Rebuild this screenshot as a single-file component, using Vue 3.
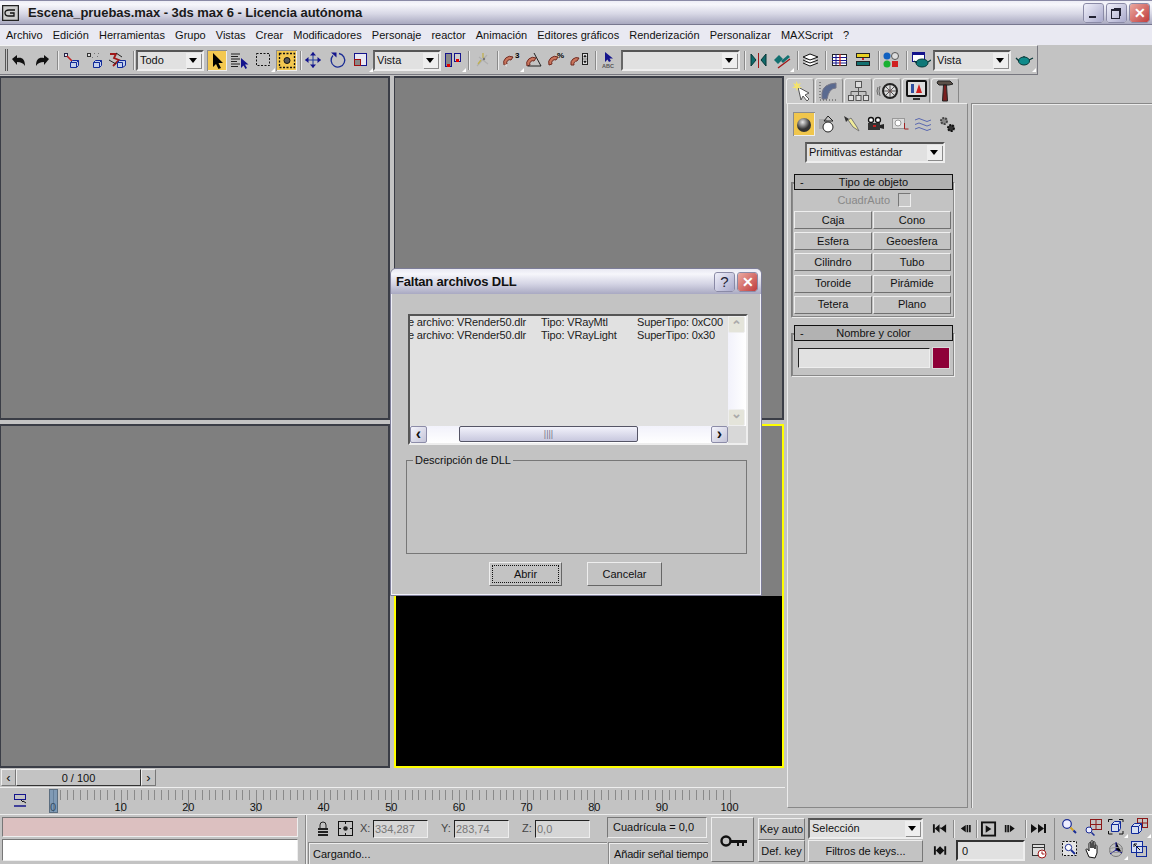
<script setup>
const S = {
  undo: '<path d="M3 9 8 5v3c5-1 8 1 8 8-2-3-4-4-8-4v3z" fill="#111"/>',
  redo: '<path d="M17 9 12 5v3C7 7 4 9 4 16c2-3 4-4 8-4v3z" fill="#111"/>',
  link: '<rect x="2.500" y="3.500" width="3" height="3" fill="#e4e4ee" stroke="#224"/><path d="M5 6 11 12" stroke="#c02020" stroke-width="1.600"/><path d="M8.500 12.500h6v5h-6zM8.500 12.500l2-2h6v5l-2 2M14.500 12.500l2-2" fill="#c4d0ea" stroke="#102a9a"/>',
  unlink: '<rect x="2.500" y="3.500" width="3" height="3" fill="#ddd" stroke="#333"/><path d="M7 7l1 1M9 3l1 1M13 3l1 1M12 6l1 1" stroke="#777"/><path d="M8.500 12.500h6v5h-6zM8.500 12.500l2-2h6v5l-2 2M14.500 12.500l2-2" fill="#c4d0ea" stroke="#102a9a"/>',
  bind: '<path d="M3 4h6l-2 4 5 2-6 6" fill="none" stroke="#a01818" stroke-width="1.800"/><path d="M9 3l6 4M2 10l7 4" stroke="#222"/><path d="M10.500 12.500h5v5h-5zM10.500 12.500l2-2h6v5l-3 2" fill="#c4d0ea" stroke="#102a9a"/>',
  arrow: '<path d="M6 3v14l3-3 2.500 5 2.500-1-2.500-5h4.500z" fill="#000"/>',
  list: '<path d="M1 4h9M1 6.500h7M1 9h9M1 11.500h6M1 14h9M1 16.500h7" stroke="#222"/><path d="M11 8v10l2.500-2.500 2 3.500 1.500-1-2-3.500h3.500z" fill="#14148c"/>',
  rect: '<rect x="3.500" y="3.500" width="13" height="12" fill="none" stroke="#111" stroke-dasharray="2 1.500"/>',
  cross: '<rect x="2.500" y="3.500" width="15" height="14" fill="none" stroke="#111" stroke-width="1.300" stroke-dasharray="2 1.500"/><circle cx="10" cy="10.500" r="3" fill="#555" stroke="#111"/>',
  move: '<path d="M10 2.500v15M2.500 10h15" stroke="#1f3a9c"/><path d="M10 2l3 3.500H7zM10 18l3-3.500H7zM2 10l3.500-3v6zM18 10l-3.500-3v6z" fill="#14148c"/>',
  rotate: '<path d="M12 3.500a6.800 6.800 0 1 1-6 2" fill="none" stroke="#1a2c94" stroke-width="1.300"/><path d="M4 2.500h5.500v5z" fill="#14148c"/>',
  scale: '<rect x="3.500" y="3.500" width="12" height="12" fill="#e8e8f2" stroke="#14148c"/><rect x="3.500" y="9.500" width="6" height="6" fill="#888" stroke="#a01010"/>',
  pair: '<rect x="1.500" y="3.500" width="6" height="13" fill="#888" stroke="#14148c"/><rect x="3" y="14" width="3" height="3" fill="#e00000"/><rect x="10.500" y="3.500" width="6" height="8" fill="#ccc" stroke="#14148c"/><rect x="12" y="9" width="3" height="3" fill="#e00000"/>',
  manip: '<path d="M4 16 14 5M6 7l9 7" stroke="#b0b0b0" stroke-width="1.300"/><path d="M10 3v5M8 10l-3 4" stroke="#c0b050" stroke-width="1.300"/><circle cx="11" cy="9" r="1.200" fill="#777"/>',
  snap3: '<path d="M2 15a6.500 6.500 0 0 1 9-8l-2 3a3 3 0 0 0-4 4z" fill="#c9755c" stroke="#702a20"/><path d="M2 15l3-1v3z" fill="#ddd"/><text x="13" y="8" font-size="8" font-weight="700" font-family="Liberation Sans">3</text>',
  angle: '<path d="M2 16a6.500 6.500 0 0 1 9-8l-2 3a3 3 0 0 0-4 4z" fill="#c9755c" stroke="#702a20"/><path d="M9 3l7 13H3" fill="none" stroke="#222"/>',
  pct: '<path d="M2 15a6.500 6.500 0 0 1 9-8l-2 3a3 3 0 0 0-4 4z" fill="#c9755c" stroke="#702a20"/><text x="10" y="8" font-size="8" font-weight="700" font-family="Liberation Sans">%</text>',
  spin: '<path d="M1 15a6 6 0 0 1 8-7l-2 3a3 3 0 0 0-3 4z" fill="#c9755c" stroke="#702a20"/><rect x="12.500" y="3.500" width="5" height="11" fill="#ddd" stroke="#222"/><path d="M12 9h6M15 5l-1.300 2h2.600zM15 13l-1.300-2h2.600z" fill="#111" stroke="#111" stroke-width=".5"/>',
  abc: '<path d="M5 2v10l2.500-2.500L9 12l2-1-1.500-2.500H13z" fill="#14148c"/><text x="2" y="18" font-size="5.500" font-weight="700" fill="#555" font-family="Liberation Sans">ABC</text>',
  mirror: '<path d="M2 4l5 6-5 6zM17 4l-5 6 5 6z" fill="#0f6b6b" stroke="#063838"/><path d="M9.500 3v15" stroke="#a01818"/>',
  align: '<path d="M2 10l5-5 4 4-5 5z" fill="#137070"/><path d="M9 11l7-6 2 2-7 6z" fill="#137070"/><path d="M6 18 18 9" stroke="#a01818" stroke-width="1.300"/>',
  layers: '<path d="M2 7l7-3 8 3-8 3zM2 10l7 3 8-3M2 13l7 3 8-3" fill="#fff" stroke="#111"/>',
  track: '<rect x="1.500" y="4.500" width="14" height="11" fill="#fff" stroke="#222"/><path d="M1 7.500h15M1 10.500h15M1 13h15M5 4v11" stroke="#14148c"/><path d="M9 4v12" stroke="#c02020" stroke-width="1.300"/>',
  schem: '<rect x="2.500" y="3.500" width="13" height="4" fill="#e8d020" stroke="#222"/><path d="M9 8v2" stroke="#d02020" stroke-width="2"/><rect x="2.500" y="11.500" width="13" height="4" fill="#137070" stroke="#222"/>',
  mat: '<circle cx="6" cy="6" r="3.500" fill="#1060c0"/><circle cx="14" cy="6" r="3.500" fill="#ddd" stroke="#555"/><circle cx="6" cy="14" r="3.500" fill="#18b030"/><rect x="11" y="11" width="6" height="6" fill="#d02020"/>',
  rscene: '<rect x="1.500" y="2.500" width="12" height="9" fill="#fff" stroke="#14148c"/><rect x="1" y="2" width="13" height="3" fill="#14148c"/><ellipse cx="11" cy="13" rx="6" ry="4" fill="#0f7878" stroke="#063838"/><path d="M3 11l3 2M17 12l3-2" stroke="#063838" stroke-width="1.300"/>',
  teapot: '<ellipse cx="10" cy="11" rx="5.500" ry="4" fill="#0f8a8a" stroke="#063838"/><path d="M10 6v1M2 8l3 3M15 10l4-2" stroke="#063838" stroke-width="1.300"/>',
  logo: '<rect x=".5" y=".5" width="16" height="15" fill="#ccc" stroke="#222" stroke-width="1.500"/><path d="M13 5H7Q3 5 3 8t4 3h5V8H8" fill="none" stroke="#111" stroke-width="1.300"/>',
  t1: '<path d="M9 7l3 13 2-4 4 5 2-2-4-4 4-2z" fill="#fff" stroke="#555"/><path d="M7 1l2 3 3-1-2 3 3 2-4 0-1 3-1-3H3l3-2-2-3 3 1z" fill="#f4e36c"/>',
  t2: '<path d="M4 20V14Q5 5 18 4v5Q11 9 9 20z" fill="#5a6a90" stroke="#778"/><path d="M2 3v18h18" stroke="#444" fill="none" stroke-dasharray="1 2"/>',
  t3: '<path d="M11.500 9v3.500M4 16v-3.500h15V16M11.500 12.500V16" stroke="#555" fill="none"/><rect x="8.500" y="2.500" width="6" height="6" fill="#ddd" stroke="#555"/><rect x="1.500" y="16.500" width="5" height="5" fill="#ddd" stroke="#555"/><rect x="9" y="16.500" width="5" height="5" fill="#ddd" stroke="#555"/><rect x="16.500" y="16.500" width="5" height="5" fill="#ddd" stroke="#555"/>',
  t4: '<circle cx="14" cy="12" r="7" fill="#ddd" stroke="#222" stroke-width="2"/><circle cx="14" cy="12" r="1.500" fill="#c02020"/><path d="M14 6v12M8 12h12M10 8l8 8M18 8l-8 8" stroke="#555"/><path d="M4 7Q2 12 4 17M2 8Q0 12 2 16" fill="none" stroke="#666"/>',
  t5: '<rect x="2" y="2" width="19" height="15" rx="1" fill="#ddd" stroke="#111" stroke-width="2"/><path d="M11 14l3-9 3 9z" fill="#d02020"/><path d="M6 14V5h3v9z" fill="#3050a0"/><path d="M8 19h7v2H8z" fill="#333"/>',
  t6: '<path d="M4 2h12l3 3-4 1H5L3 4z" fill="#5a5048" stroke="#222"/><path d="M9.500 6h3l1 16h-5z" fill="#7a2020" stroke="#222"/>',
  sphere: '<defs><radialGradient id="sp" cx=".4" cy=".3"><stop offset="0" stop-color="#e8e8e8"/><stop offset="1" stop-color="#333"/></radialGradient></defs><circle cx="11" cy="12" r="7" fill="url(#sp)"/>',
  shape: '<rect x="2" y="6" width="8" height="10" fill="#aaa"/><circle cx="11" cy="14" r="5" fill="#fff" stroke="#222"/><path d="M7 8l4-5 5 5z" fill="none" stroke="#222"/>',
  light: '<path d="M3 3l5 3-3 3z" fill="#333"/><path d="M7 7l3-2 6 9 2 4-6-4z" fill="#f0ec9a" stroke="#777"/>',
  cam: '<circle cx="6" cy="7" r="2.500" fill="#fff" stroke="#111" stroke-width="1.300"/><circle cx="13" cy="7" r="2.500" fill="#fff" stroke="#111" stroke-width="1.300"/><rect x="3" y="10" width="12" height="7" fill="#333"/><path d="M15 12l4-1v5l-4-1z" fill="#222"/><rect x="8" y="12" width="3" height="2" fill="#c02020"/>',
  helper: '<rect x="3.500" y="5.500" width="12" height="10" fill="#ddd" stroke="#999"/><circle cx="9" cy="10" r="3" fill="#fff" stroke="#999"/><path d="M15.500 10v6h4" stroke="#a02020" fill="none"/>',
  wave: '<path d="M2 7q4-3 8 0t8 0M2 11.500q4-3 8 0t8 0M2 16q4-3 8 0t8 0" fill="none" stroke="#5a68b0"/>',
  gears: '<circle cx="7" cy="8" r="3" fill="#888" stroke="#444" stroke-width="2" stroke-dasharray="2 1"/><circle cx="14" cy="15" r="3" fill="#333" stroke="#111" stroke-width="2" stroke-dasharray="2 1"/>',
  lock: '<path d="M4 7V4a3 3 0 0 1 6 0v3" fill="none" stroke="#222"/><path d="M2 7h10v2H2zM2 10h10v2H2zM2 13h10v2H2z" fill="#222"/>',
  pivot: '<rect x=".5" y=".5" width="14" height="14" fill="none" stroke="#111"/><circle cx="7.500" cy="7.500" r="2.200" fill="#222"/><path d="M1 7.500h2M12 7.500h2M7.500 1v2M7.500 12v2" stroke="#111"/>',
  key: '<circle cx="8" cy="9" r="4.500" fill="none" stroke="#111" stroke-width="2.400"/><path d="M12 8h17v3h-3v3h-2v-3h-3v3h-2v-3h-7z" fill="#111"/>',
  keyptr: '<rect x="1.500" y="1.500" width="11" height="5" fill="none" stroke="#14148c"/><path d="M8 7l2 2v-1l3 2" stroke="#111" fill="none"/><path d="M1 13h12" stroke="#14148c" stroke-width="1.500"/>',
  first: '<path d="M1 3h2v9H1zM8 3v9L3 7.500zM15 3v9L9 7.500z" fill="#111"/><path d="M8 7h2" stroke="#111"/>',
  prev: '<path d="M7 3v9L1 7.500zM8 3h2v9H8zM11 3h2v9h-2z" fill="#111"/>',
  play: '<rect x="1" y="1" width="14" height="14" fill="none" stroke="#111" stroke-width="2"/><path d="M5 4v8l6-4z" fill="#111"/>',
  next: '<path d="M1 3h2v9H1zM4 3h2v9H4zM7 3v9l6-4.500z" fill="#111"/>',
  last: '<path d="M1 3v9l6-4.500zM8 3v9l6-4.500zM14 3h2v9h-2z" fill="#111"/>',
  prevkey: '<path d="M1 3h2v9H1zM7.500 3v9L3 7.500zM7.500 3v9L12 7.500zM12 3h2v9h-2z" fill="#111"/>',
  time: '<rect x="1.500" y="1.500" width="12" height="11" fill="#ddd" stroke="#333"/><path d="M1 4.500h12" stroke="#333"/><circle cx="11" cy="11" r="4" fill="#fff" stroke="#a01818"/><path d="M11 8.500V11h2.500" stroke="#a01818" fill="none"/>',
  zoom: '<circle cx="6" cy="6" r="4.300" fill="#eef" stroke="#1a2c94" stroke-width="1.200"/><path d="M9.500 9.500l3 3" stroke="#d0a020" stroke-width="1.800"/><path d="M12.500 12.500l2.500 2.500" stroke="#1a2c94" stroke-width="2"/>',
  zoomall: '<rect x="6.500" y="1.500" width="11" height="10" fill="none" stroke="#8c1818"/><path d="M12 1v11M6 6.500h12" stroke="#8c1818"/><circle cx="5" cy="12" r="3" fill="#eef" stroke="#1a2c94"/><path d="M7.500 14.500l3 3" stroke="#1a2c94" stroke-width="1.500"/>',
  extents: '<path d="M1.500 4V1.500h4M12 1.500h4V4M1.500 13v3h4M12 16h4v-3" fill="none" stroke="#111"/><path d="M4.500 6.500h7v7h-7zM4.500 6.500l3-3h6v7l-2 3M11.500 6.500l2-3" fill="#d5def0" stroke="#102a9a"/>',
  extall: '<rect x="7.500" y=".5" width="10" height="9" fill="none" stroke="#8c1818"/><path d="M12.500 0v10M7 5h11" stroke="#8c1818"/><path d="M1.500 8.500h7v7h-7zM1.500 8.500l3-3h7v7l-3 3M8.500 8.500l3-3" fill="#d5def0" stroke="#102a9a"/>',
  region: '<rect x="1.500" y="1.500" width="14" height="14" fill="#e4e4e4" stroke="#111" stroke-dasharray="2 1.500"/><circle cx="7.500" cy="7.500" r="3.200" fill="#fff" stroke="#1a2c94"/><path d="M10 10l4 4" stroke="#1a2c94" stroke-width="1.800"/>',
  pan: '<path d="M5 17 2 10c0-2 2-1 3 1V4c0-2 2-2 2 0v4-6c0-2 2-2 2 0v6-5c0-2 2-2 2 0v6-3c0-2 2-1 2 0v7l-2 5z" fill="#fff" stroke="#111"/>',
  orbit: '<circle cx="9" cy="10" r="6.500" fill="none" stroke="#777"/><path d="M9 2v8l6 3M9 10l-6 4" stroke="#14148c"/><ellipse cx="9" cy="10" rx="6.500" ry="2.500" fill="none" stroke="#999"/>',
  maxi: '<rect x="1.500" y="1.500" width="11" height="11" fill="#d5def0" stroke="#102a9a"/><rect x="6.500" y="6.500" width="10" height="10" fill="none" stroke="#102a9a"/><path d="M4 4l6 6M4 4h3M4 4v3" stroke="#111" fill="none"/>'
}

function flow(list) {
  let end = 0
  return list.map((it) => {
    const item = { ...it, ml: it.x - end }
    end = it.x + it.w
    return item
  })
}

const menus = ['Archivo', 'Edición', 'Herramientas', 'Grupo', 'Vistas', 'Crear', 'Modificadores', 'Personaje', 'reactor', 'Animación', 'Editores gráficos', 'Renderización', 'Personalizar', 'MAXScript', '?']

const tools = flow([
  { k: 'grip', x: 5, w: 3 }, { i: 'undo', x: 9, w: 20 }, { i: 'redo', x: 32, w: 20 }, { k: 'sep', x: 57, w: 2 },
  { i: 'link', x: 62, w: 20 }, { i: 'unlink', x: 85, w: 20 }, { i: 'bind', x: 107, w: 20 }, { k: 'sep', x: 133, w: 2 },
  { k: 'combo', t: 'Todo', x: 136, w: 68 }, { i: 'arrow', x: 207, w: 20, on: 1 }, { i: 'list', x: 230, w: 20 },
  { i: 'rect', x: 253, w: 20, f: 1 }, { i: 'cross', x: 276, w: 21, on: 1 }, { k: 'sep', x: 300, w: 2 },
  { i: 'move', x: 303, w: 20 }, { i: 'rotate', x: 327, w: 20 }, { i: 'scale', x: 351, w: 20, f: 1 },
  { k: 'combo', t: 'Vista', x: 373, w: 68 }, { i: 'pair', x: 444, w: 20, f: 1 }, { k: 'sep', x: 468, w: 2 },
  { i: 'manip', x: 473, w: 20 }, { k: 'sep', x: 497, w: 2 }, { i: 'snap3', x: 502, w: 20, f: 1 }, { i: 'angle', x: 525, w: 20 },
  { i: 'pct', x: 547, w: 20 }, { i: 'spin', x: 570, w: 20 }, { k: 'sep', x: 595, w: 2 }, { i: 'abc', x: 600, w: 20 },
  { k: 'combo', t: '', x: 621, w: 119 }, { k: 'sep', x: 744, w: 2 }, { i: 'mirror', x: 749, w: 20 }, { i: 'align', x: 772, w: 20, f: 1 },
  { k: 'sep', x: 797, w: 2 }, { i: 'layers', x: 801, w: 20 }, { k: 'sep', x: 825, w: 2 }, { i: 'track', x: 831, w: 20 },
  { i: 'schem', x: 854, w: 20 }, { k: 'sep', x: 878, w: 2 }, { i: 'mat', x: 881, w: 20 }, { k: 'sep', x: 906, w: 2 },
  { i: 'rscene', x: 911, w: 20 }, { k: 'combo', t: 'Vista', x: 933, w: 78 }, { i: 'teapot', x: 1014, w: 20, f: 1 }
])

const tabs = ['t1', 't2', 't3', 't4', 't5', 't6']
const creators = ['sphere', 'shape', 'light', 'cam', 'helper', 'wave', 'gears']
const prims = ['Caja', 'Cono', 'Esfera', 'Geoesfera', 'Cilindro', 'Tubo', 'Toroide', 'Pirámide', 'Tetera', 'Plano']
const coords = [
  { l: 'X:', v: '334,287' }, { l: 'Y:', v: '283,74' }, { l: 'Z:', v: '0,0' }
]
const ticks = Array.from({ length: 101 }, (_, n) => n)
const play1 = flow([
  { i: 'first', x: 1, w: 16 }, { s: 1, x: 22, w: 2 }, { i: 'prev', x: 29, w: 14 }, { s: 1, x: 45, w: 2 },
  { i: 'play', x: 50, w: 16 }, { i: 'next', x: 73, w: 14 }, { s: 1, x: 94, w: 2 }, { i: 'last', x: 99, w: 17 }
])
const nav = ['zoom', 'zoomall', 'extents', 'extall', 'region', 'pan', 'orbit', 'maxi']
</script>

<template>
  <div class="app">
    <header class="title">
      <svg class="logo" width="17" height="16" viewBox="0 0 17 16" v-html="S.logo"></svg>
      <span class="title-text">Escena_pruebas.max - 3ds max 6 - Licencia autónoma</span>
      <div class="wbtns">
        <button class="wb"><span class="w-min"></span></button>
        <button class="wb"><span class="w-max"></span></button>
        <button class="wb red">✕</button>
      </div>
    </header>

    <nav class="menu"><span v-for="m in menus" :key="m">{{ m }}</span></nav>

    <div class="toolrow">
      <div class="toolbar">
        <template v-for="(t, n) in tools" :key="n">
          <div v-if="t.k === 'grip'" class="grip" :style="{ marginLeft: t.ml + 'px' }"></div>
          <div v-else-if="t.k === 'sep'" class="sep" :style="{ marginLeft: t.ml + 'px' }"></div>
          <div v-else-if="t.k === 'combo'" class="combo" :style="{ marginLeft: t.ml + 'px', width: t.w + 'px' }">
            <span>{{ t.t }}</span><i class="drop"></i>
          </div>
          <div v-else class="tool" :class="{ on: t.on, fly: t.f }" :style="{ marginLeft: t.ml + 'px', width: t.w + 'px' }">
            <svg width="20" height="20" viewBox="0 0 20 20" v-html="S[t.i]"></svg>
          </div>
        </template>
      </div>
    </div>

    <div class="main">
      <div class="leftcol">
        <div class="views">
          <div class="vp"></div>
          <div class="vp"></div>
          <div class="vp"></div>
          <div class="vp active"></div>
        </div>
        <div class="tslider">
          <button class="tarrow">‹</button>
          <div class="tthumb">0 / 100</div>
          <button class="tarrow">›</button>
        </div>
        <div class="ruler">
          <svg class="keyptr" width="15" height="15" viewBox="0 0 15 15" v-html="S.keyptr"></svg>
          <div class="ticks">
            <i v-for="n in ticks" :key="n" class="tick" :class="{ ten: n % 10 === 0 }"><b v-if="n % 10 === 0">{{ n }}</b></i>
            <div class="playhead"></div>
          </div>
        </div>
      </div>

      <aside class="side">
        <div class="tabs">
          <div v-for="(t, n) in tabs" :key="t" class="tab" :class="{ cur: n === 0 }">
            <svg width="23" height="23" viewBox="0 0 23 23" v-html="S[t]"></svg>
          </div>
        </div>
        <div class="panels">
          <section class="cmd">
            <div class="creators">
              <div v-for="(c, n) in creators" :key="c" class="cr" :class="{ on: n === 0 }">
                <svg width="22" height="22" viewBox="0 0 22 22" v-html="S[c]"></svg>
              </div>
            </div>
            <div class="combo primcombo"><span>Primitivas estándar</span><i class="drop"></i></div>

            <div class="rollout first">
              <div class="rhead"><span class="minus">-</span>Tipo de objeto</div>
              <div class="rbox">
                <div class="auto"><span>CuadrAuto</span><i class="chk"></i></div>
                <div class="prims"><button v-for="p in prims" :key="p" class="prim">{{ p }}</button></div>
              </div>
            </div>
            <div class="rollout">
              <div class="rhead"><span class="minus">-</span>Nombre y color</div>
              <div class="rbox namebox">
                <div class="nameinput"></div><div class="swatch"></div>
              </div>
            </div>
          </section>
          <section class="cmd2"></section>
        </div>
      </aside>
    </div>

    <footer class="bottom">
      <div class="msgs">
        <div class="pink"></div>
        <div class="white"></div>
      </div>
      <div class="coords">
        <div class="crow">
          <svg class="lock" width="14" height="16" viewBox="0 0 14 16" v-html="S.lock"></svg>
          <svg class="pivot" width="15" height="15" viewBox="0 0 15 15" v-html="S.pivot"></svg>
          <div class="xyz">
            <label v-for="c in coords" :key="c.l" class="xyzitem"><span>{{ c.l }}</span><em>{{ c.v }}</em></label>
          </div>
          <div class="grid">Cuadrícula = 0,0</div>
        </div>
        <div class="srow">
          <div class="loading">Cargando...</div>
          <div class="addtime">Añadir señal tiempo</div>
        </div>
      </div>
      <button class="keybig"><svg width="30" height="16" viewBox="0 0 30 16" v-html="S.key"></svg></button>
      <div class="kcol">
        <button class="kbtn">Key auto</button>
        <button class="kbtn">Def. key</button>
      </div>
      <div class="selcol">
        <div class="combo selcombo"><span>Selección</span><i class="drop"></i></div>
        <button class="filters">Filtros de keys...</button>
      </div>
      <div class="playback">
        <div class="prow">
          <template v-for="(p, n) in play1" :key="n">
            <i v-if="p.s" class="psep" :style="{ marginLeft: p.ml + 'px' }"></i>
            <svg v-else :style="{ marginLeft: p.ml + 'px' }" :width="p.w" height="16" viewBox="0 0 17 16" v-html="S[p.i]"></svg>
          </template>
        </div>
        <div class="prow second">
          <svg width="16" height="16" viewBox="0 0 17 16" v-html="S.prevkey"></svg>
          <div class="frame">0</div>
          <svg width="16" height="16" viewBox="0 0 16 16" v-html="S.time"></svg>
        </div>
      </div>
      <div class="nav">
        <div v-for="n in nav" :key="n" class="navi" :class="{ fly: n === 'extents' || n === 'extall' || n === 'orbit' }">
          <svg width="19" height="19" viewBox="0 0 19 19" v-html="S[n]"></svg>
        </div>
      </div>
    </footer>

    <div class="dialog">
      <div class="dtitle">
        <span>Faltan archivos DLL</span>
        <div class="wbtns dlg">
          <button class="wb q">?</button>
          <button class="wb red">✕</button>
        </div>
      </div>
      <div class="dbody">
        <div class="listbox">
          <div class="listmain">
            <div class="rows">
              <div class="lrow"><span>e archivo: VRender50.dlr</span><span>Tipo: VRayMtl</span><span>SuperTipo: 0xC00</span></div>
              <div class="lrow"><span>e archivo: VRender50.dlr</span><span>Tipo: VRayLight</span><span>SuperTipo: 0x30</span></div>
            </div>
            <div class="vbar">
              <i class="sb dis">⌃</i>
              <i class="sb dis down">⌄</i>
            </div>
          </div>
          <div class="hbar">
            <i class="sb">‹</i>
            <div class="htrack"><div class="hthumb">||||</div></div>
            <i class="sb">›</i>
            <div class="corner"></div>
          </div>
        </div>
        <fieldset class="dll">
          <legend>Descripción de DLL</legend>
        </fieldset>
        <div class="dbtns">
          <button class="dbtn def"><span>Abrir</span></button>
          <button class="dbtn">Cancelar</button>
        </div>
      </div>
    </div>
  </div>
</template>

<style scoped>
.app {
  position: relative;
  width: 1152px;
  height: 864px;
  overflow: hidden;
  display: flex;
  flex-direction: column;
  background: #c3c3c3;
  color: #111;
  font: 11px/13px "Liberation Sans", Arial, sans-serif;
}
button { font: inherit; color: inherit; padding: 0; margin: 0; }

/* title bar */
.title {
  height: 25px;
  flex: none;
  box-sizing: border-box;
  display: flex;
  align-items: center;
  border-top: 1px solid #8a8aa6;
  border-bottom: 1px solid #77778f;
  background: linear-gradient(#eeeef6 0, #f6f6fb 15%, #d8d8e6 55%, #a9a9c0 100%);
}
.logo { margin: 0 0 0 2px; }
.title-text {
  margin-left: 9px;
  font: bold 13px/18px "Liberation Sans", Arial, sans-serif;
  letter-spacing: -.05px;
  color: #1a1a1a;
  white-space: nowrap;
}
.wbtns { margin-left: auto; margin-right: 2px; display: flex; gap: 2px; }
.wb {
  width: 21px;
  height: 20px;
  border: 1px solid #fff;
  border-radius: 3px;
  background: linear-gradient(135deg, #f0f0fa, #a9a9cb);
  position: relative;
  display: flex;
  align-items: center;
  justify-content: center;
  outline: 1px solid #8a8aa6;
  outline-offset: -1px;
  font: bold 14px/14px "Liberation Sans", sans-serif;
}
.wb.red { background: linear-gradient(135deg, #eba9a0, #c03c3c); color: #fff; }
.w-min { width: 7px; height: 2px; background: #223; margin-top: 9px; margin-right: 3px; }
.w-max { width: 7px; height: 7px; border: 1px solid #223; border-top-width: 2px; margin: 2px 2px 0 0; box-shadow: 2px -2px 0 -1px #223; }

/* menu */
.menu {
  height: 20px;
  flex: none;
  display: flex;
  align-items: center;
  padding-left: 6px;
  gap: 10.1px;
  background: #e9e9f2;
  white-space: nowrap;
}

/* toolbar */
.toolrow { height: 31px; flex: none; display: flex; align-items: flex-start; }
.toolbar {
  width: 1038px;
  height: 30px;
  display: flex;
  align-items: center;
  box-sizing: border-box;
  border-top: 1px solid #f3f3f3;
  border-right: 1px solid #77777f;
  border-bottom: 1px solid #77777f;
}
.grip { width: 3px; height: 22px; border-left: 1px solid #555; border-right: 1px solid #555; box-sizing: border-box; }
.sep { width: 2px; height: 19px; border-left: 1px solid #8a8a8a; border-right: 1px solid #ececec; box-sizing: border-box; }
.tool { height: 21px; flex: none; position: relative; display: flex; align-items: center; justify-content: center; }
.tool.on { background: #f3c850; box-shadow: inset 1px 1px 0 #8c8c8c, inset -1px -1px 0 #eee; }
.fly::after {
  content: "";
  position: absolute;
  right: -2px;
  bottom: -1px;
  border-left: 4px solid transparent;
  border-bottom: 4px solid #fff;
}
.combo {
  height: 21px;
  flex: none;
  box-sizing: border-box;
  display: flex;
  align-items: center;
  justify-content: space-between;
  padding: 0 1px 0 2px;
  background: #e1e1e1;
  border: 2px solid;
  border-color: #555 #eee #eee #666;
  font-size: 11px;
}
.drop {
  width: 15px;
  height: 15px;
  background: #eeeeee;
  box-shadow: 1px 1px 0 #8a8a8a;
  position: relative;
}
.drop::after {
  content: "";
  position: absolute;
  left: 3px;
  top: 5px;
  border: 4px solid transparent;
  border-top: 5px solid #000;
  border-bottom: 0;
}

/* main */
.main { height: 738px; flex: none; display: flex; }
.leftcol { width: 785px; flex: none; display: flex; flex-direction: column; }
.views { display: grid; grid-template-columns: 390px 390px; grid-template-rows: 344px 344px; gap: 4px; height: 692px; }
.vp { background: #7f7f7f; border: 1px solid #3a3d46; border-width: 2px 2px 2px 1px; box-sizing: border-box; }
.vp.active {
  border: 2px solid #ffff00;
  background: linear-gradient(#7f7f7f 170px, #000 170px);
}
.tslider { height: 17px; margin-top: 1px; display: flex; padding-left: 1px; }
.tarrow { width: 15px; height: 17px; border: 1px solid; border-color: #eee #777 #777 #eee; background: #c3c3c3; font: 13px/13px "Liberation Sans", sans-serif; }
.tthumb {
  width: 125px;
  height: 17px;
  box-sizing: border-box;
  text-align: center;
  line-height: 16px;
  background: #c3c3c3;
  border: 1px solid;
  border-color: #eee #333 #333 #eee;
  font-size: 11px;
}
.ruler { height: 26px; margin-top: 1px; position: relative; border-top: 1px solid #eee; box-sizing: border-box; }
.keyptr { position: absolute; left: 13px; top: 5px; }
.ticks { position: absolute; left: 53px; top: 2px; width: 679px; height: 22px; display: flex; justify-content: space-between; }
.tick { width: 1px; height: 10px; background: #8a8a8a; position: relative; flex: none; }
.tick.ten { height: 22px; }
.tick b {
  position: absolute;
  top: 11px;
  left: -15px;
  width: 30px;
  text-align: center;
  font: 11px/12px "Liberation Sans", sans-serif;
  color: #111;
}
.playhead {
  position: absolute;
  left: -4px;
  top: -1px;
  width: 9px;
  height: 24px;
  box-sizing: border-box;
  background: rgba(72, 120, 170, .55);
  border: 1px solid #5c6e80;
}

/* side panel */
.side { flex: 1; min-width: 0; display: flex; flex-direction: column; margin-left: 1px; }
.tabs { height: 27px; display: flex; padding-top: 2px; box-sizing: border-box; gap: 1px; }
.tab {
  width: 28px;
  height: 25px;
  box-sizing: border-box;
  border: 1px solid;
  border-color: #ececec #888 transparent #ececec;
  border-radius: 3px 3px 0 0;
  display: flex;
  align-items: center;
  justify-content: center;
}
.tab.cur { background: #c9c9c9; height: 26px; }
.panels { display: flex; height: 705px; }
.cmd {
  width: 181px;
  margin-left: 1px;
  box-sizing: border-box;
  border: 1px solid;
  border-color: #ececec #888 #888 #ececec;
  padding: 8px 0 0 5px;
}
.cmd2 {
  flex: 1;
  margin-left: 3px;
  border-top: 1px solid #888;
  border-left: 1px solid #888;
  box-shadow: inset 1px 1px 0 #ececec;
}
.creators { display: flex; gap: 2px; height: 24px; }
.cr { width: 22px; height: 24px; display: flex; align-items: center; justify-content: center; }
.cr.on { background: #f0c64c; box-shadow: inset 1px 1px 0 #8c8c8c, inset -1px -1px 0 #eee; }
.primcombo { width: 140px; margin: 6px 0 0 12px; height: 21px; }
.rollout { width: 164px; margin-left: -2px; }
.rollout.first { margin-top: 11px; }
.rollout + .rollout { margin-top: 7px; }
.rhead {
  width: 159px;
  height: 16px;
  margin-left: 3px;
  box-sizing: border-box;
  border: 1px solid #111;
  background: #b2b2b2;
  text-align: center;
  line-height: 14px;
  position: relative;
  z-index: 1;
}
.minus { position: absolute; left: 5px; top: 0; }
.rbox {
  margin-top: -8px;
  box-sizing: border-box;
  border: 1px solid;
  border-color: #7d7d7d #ececec #ececec #7d7d7d;
  outline: 1px solid #888;
  outline-offset: -2px;
  padding: 8px 3px 3px 2px;
}
.auto { display: flex; align-items: center; justify-content: flex-end; height: 20px; gap: 8px; padding-right: 40px; color: #888; }
.chk { width: 13px; height: 14px; border: 1px solid; border-color: #777 #eee #eee #777; background: #c8c8c8; box-sizing: border-box; margin-top: -3px; }
.auto span { margin-top: -2px; }
.prims { display: grid; grid-template-columns: 78px 78px; column-gap: 1px; row-gap: 3.2px; }
.prim {
  height: 18px;
  background: #c3c3c3;
  border: 1px solid;
  border-color: #eee #707070 #707070 #eee;
}
.namebox { display: flex; gap: 3px; height: 44px; padding: 14px 0 0 6px; }
.nameinput {
  width: 132px;
  height: 20px;
  box-sizing: border-box;
  background: #e1e1e1;
  border: 1px solid;
  border-color: #222 #eee #eee #222;
}
.swatch { width: 16px; height: 20px; background: #8e0038; box-shadow: 0 0 0 1px #d8d8d8; }

/* bottom */
.bottom { height: 50px; flex: none; display: flex; border-top: 1px solid #ececec; box-sizing: border-box; }
.msgs { width: 302px; flex: none; padding: 2px 0 0 2px; box-sizing: border-box; display: flex; flex-direction: column; gap: 2px; }
.pink { width: 296px; height: 20px; box-sizing: border-box; background: #dcc0c0; border: 1px solid; border-color: #777 #eee #eee #777; }
.white { width: 296px; height: 22px; box-sizing: border-box; background: #fff; border: 1px solid; border-color: #777 #eee #eee #777; }
.coords { width: 405px; flex: none; border-left: 1px solid #888; box-shadow: inset 1px 0 0 #eee; margin-left: 3px; box-sizing: border-box; display: flex; flex-direction: column; }
.crow { height: 27px; display: flex; align-items: center; position: relative; }
.lock { margin-left: 10px; }
.pivot { margin-left: 8px; }
.xyz { display: flex; margin-left: 7px; }
.xyzitem { display: flex; align-items: center; width: 81px; }
.xyzitem span { width: 13px; color: #444; }
.xyzitem em {
  width: 55px;
  height: 18px;
  box-sizing: border-box;
  font-style: normal;
  line-height: 16px;
  padding-left: 1px;
  color: #777;
  background: #d6d6d6;
  border: 1px solid;
  border-color: #222 #eee #eee #222;
}
.grid { position: absolute; left: 301px; top: 2px; width: 100px; height: 21px; box-sizing: border-box; padding-left: 5px; line-height: 19px; border: 1px solid; border-color: #777 #eee #eee #777; }
.srow { height: 22px; display: flex; }
.loading { width: 299px; margin-left: 2px; box-sizing: border-box; padding: 5px 0 0 4px; border-top: 1px solid #888; border-left: 1px solid #888; box-shadow: inset 1px 1px 0 #eee; }
.addtime { width: 100px; margin-left: 1px; box-sizing: border-box; padding: 5px 0 0 5px; white-space: nowrap; overflow: hidden; letter-spacing: -.15px; border-top: 1px solid #888; border-left: 1px solid #888; box-shadow: inset 1px 1px 0 #eee; }
.keybig { width: 43px; height: 45px; margin: 2px 0 0 1px; flex: none; background: #c3c3c3; border: 1px solid; border-color: #eee #777 #777 #eee; display: flex; align-items: center; justify-content: center; }
.kcol { width: 47px; margin: 3px 0 0 4px; flex: none; display: flex; flex-direction: column; }
.kbtn { height: 22px; background: #c3c3c3; border: 1px solid; border-color: #eee #777 #777 #eee; font-size: 11px; white-space: nowrap; }
.selcol { width: 115px; flex: none; margin: 3px 0 0 3px; display: flex; flex-direction: column; gap: 1px; }
.selcombo { width: 115px; }
.filters { height: 22px; background: #c3c3c3; border: 1px solid; border-color: #eee #777 #777 #eee; }
.playback { width: 122px; margin: 3px 0 0 8px; flex: none; }
.prow { display: flex; height: 21px; align-items: center; }
.psep { display: block; width: 2px; height: 18px; flex: none; border-left: 1px solid #8a8a8a; border-right: 1px solid #ececec; box-sizing: border-box; }
.second { margin-top: 1px; gap: 7px; padding-left: 2px; }
.frame { width: 69px; height: 21px; box-sizing: border-box; padding: 3px 0 0 4px; background: #e1e1e1; border: 2px solid; border-color: #333 #eee #eee #333; }
.second svg:last-child { margin-left: -1px; }
.nav {
  flex: 1;
  display: grid;
  grid-template-columns: repeat(4, 23px);
  grid-auto-rows: 22px;
  margin: 3px 0 0 1px;
  padding-left: 6px;
  border-left: 1px solid #8a8a8a;
  height: 42px;
}
.navi { width: 19px; height: 19px; position: relative; }

/* dialog */
.dialog {
  position: absolute;
  left: 390px;
  top: 268px;
  width: 372px;
  height: 328px;
  box-sizing: border-box;
  display: flex;
  flex-direction: column;
  background: #c3c3c3;
  border: 1px solid #7d7d98;
  border-radius: 6px 6px 0 0;
}
.dtitle {
  height: 25px;
  flex: none;
  display: flex;
  align-items: center;
  padding-left: 5px;
  border-radius: 5px 5px 0 0;
  background: linear-gradient(#e8e8f2, #f6f6fb 20%, #d4d4e4 60%, #a9a9c2);
  font: bold 13px/18px "Liberation Sans", Arial, sans-serif;
  letter-spacing: -.2px;
}
.wbtns.dlg { margin-right: 3px; }
.wb.q { font: 15px/16px "Liberation Sans", sans-serif; color: #223; }
.dbody {
  flex: 1;
  border: 1px solid #f0f0f8;
  border-top: 0;
  padding: 20px 0 0 15px;
  display: flex;
  flex-direction: column;
}
.listbox {
  width: 340px;
  height: 131px;
  margin-left: 1px;
  box-sizing: border-box;
  border: 2px solid;
  border-color: #555 #eee #eee #555;
  background: #e1e1e1;
  display: flex;
  flex-direction: column;
  flex: none;
}
.listmain { flex: 1; display: flex; min-height: 0; }
.rows { flex: 1; overflow: hidden; white-space: nowrap; }
.lrow { display: flex; height: 13px; color: #222; letter-spacing: -.15px; }
.lrow span:nth-child(1) { width: 133px; margin-left: -2px; flex: none; }
.lrow span:nth-child(2) { width: 96px; flex: none; }
.vbar { width: 18px; flex: none; display: flex; flex-direction: column; justify-content: space-between; background: linear-gradient(90deg, #f2f2fb, #ffffff); }
.sb {
  width: 17px;
  height: 17px;
  display: block;
  box-sizing: border-box;
  font: bold 16px/13px "Liberation Sans", sans-serif;
  font-style: normal;
  text-align: center;
  color: #111;
  background: linear-gradient(135deg, #f4f4fc, #c4c4d8);
  border: 1px solid #8c8ca8;
  border-radius: 2px;
}
.sb.dis { color: #aaa; font-size: 13px; line-height: 18px; background: #e4e4da; border-color: #eee; }
.sb.dis.down { line-height: 8px; }
.hbar { height: 17px; flex: none; display: flex; padding-left: 0; background: linear-gradient(#f2f2fb, #ffffff); }
.htrack { flex: 1; padding-left: 32px; }
.hthumb {
  width: 179px;
  height: 16px;
  box-sizing: border-box;
  text-align: center;
  font-size: 9px;
  line-height: 14px;
  color: #778;
  background: linear-gradient(#f2f2fb, #c8c8de);
  border: 1px solid #556;
  border-radius: 2px;
}
.corner { width: 18px; background: #d8d8d8; }
.dll {
  width: 341px;
  height: 100px;
  margin: 9px 0 0 -1px;
  padding: 0;
  box-sizing: border-box;
  border: 1px solid #777;
  flex: none;
}
.dll legend { padding: 0 2px 0 2px; margin-left: 6px; font-size: 11px; line-height: 13px; }
.dbtns { display: flex; gap: 25px; margin: 8px 0 0 82px; }
.dbtn {
  width: 75px;
  height: 24px;
  background: #c3c3c3;
  border: 1px solid;
  border-color: #eee #666 #666 #eee;
}
.dbtn.def { width: 73px; padding: 2px; }
.dbtn.def span { display: block; height: 100%; line-height: 16px; border: 1px dotted #111; box-sizing: border-box; }
</style>
